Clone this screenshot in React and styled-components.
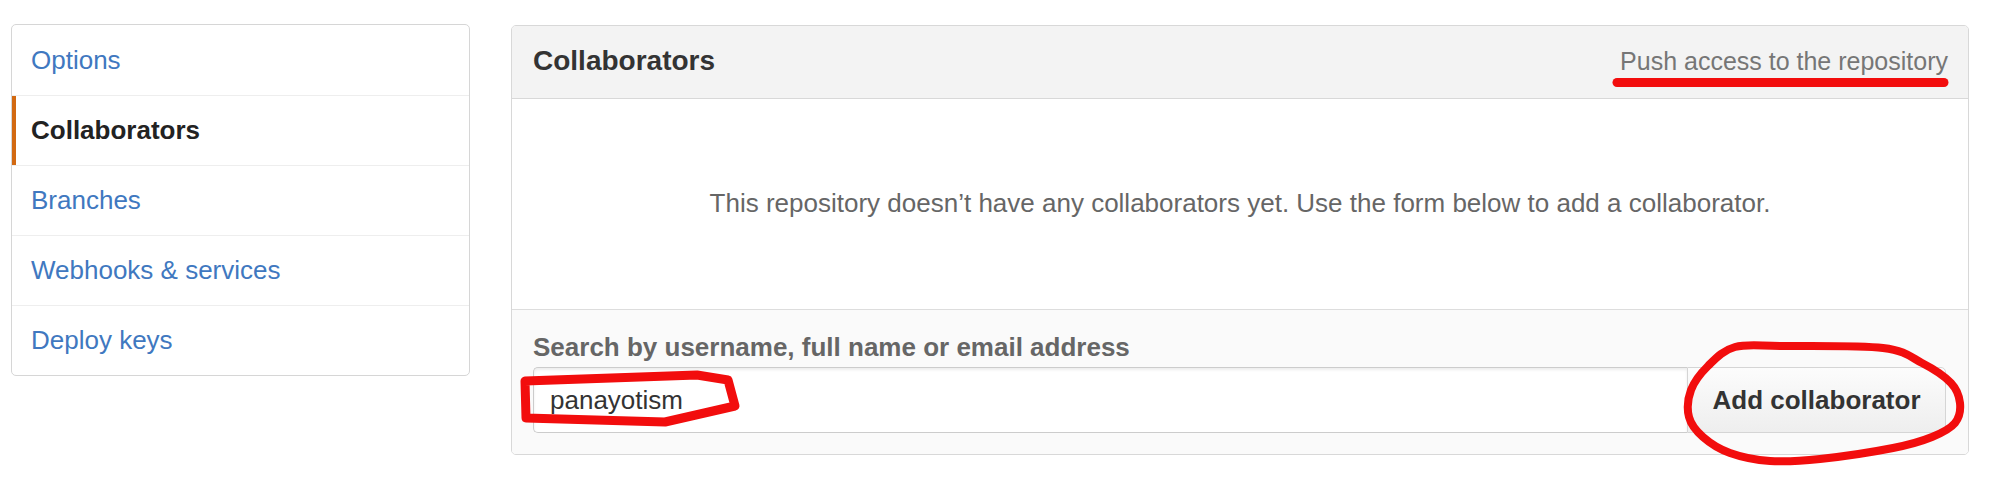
import React from "react";
import styled, { createGlobalStyle } from "styled-components";

const GlobalStyle = createGlobalStyle`
  html, body {
    margin: 0;
    padding: 0;
    background: #ffffff;
  }
  body {
    font-family: "Liberation Sans", Arial, Helvetica, sans-serif;
    color: #333;
  }
  * { box-sizing: border-box; }
`;

const Root = styled.div`
  position: relative;
  width: 2008px;
  min-height: 496px;
`;

const Page = styled.div`
  display: flex;
  align-items: flex-start;
  gap: 41px;
  padding: 24px 39px 0 11px;
`;

const Sidebar = styled.nav`
  flex: none;
  width: 459px;
  border: 1px solid #d6d6d6;
  border-radius: 5px;
  background: #fff;
  overflow: hidden;
`;

const MenuItem = styled.a`
  display: flex;
  align-items: center;
  height: 70px;
  padding: 0 0 2px 19px;
  font-size: 26px;
  line-height: 30px;
  text-decoration: none;
  border-top: 1px solid ${(p) => (p.$first ? "transparent" : "#eeeeee")};
  color: ${(p) => (p.$active ? "#222222" : "#4078c0")};
  font-weight: ${(p) => (p.$active ? 700 : 400)};
  box-shadow: ${(p) => (p.$active ? "inset 4px 0 0 #d26911" : "none")};
  cursor: pointer;
`;

const Panel = styled.section`
  flex: 1;
  margin-top: 1px;
  border: 1px solid #d8d8d8;
  border-radius: 5px;
  overflow: hidden;
  background: #fff;
`;

const PanelHeader = styled.header`
  display: flex;
  justify-content: space-between;
  align-items: center;
  height: 73px;
  padding: 0 20px 3px 21px;
  background: #f3f3f3;
  border-bottom: 1px solid #d8d8d8;
`;

const Title = styled.h3`
  margin: 0;
  font-size: 28px;
  line-height: 32px;
  font-weight: 700;
  color: #333;
`;

const HeaderNote = styled.span`
  font-size: 25px;
  line-height: 30px;
  color: #767676;
`;

const PanelBody = styled.div`
  display: flex;
  align-items: center;
  justify-content: center;
  height: 211px;
  padding-bottom: 2px;
  border-bottom: 1px solid #dddddd;
  font-size: 26px;
  line-height: 30px;
  color: #666;
`;

const FormSection = styled.form`
  background: #fafafa;
  padding: 22px 22px 21px 21px;
`;

const Label = styled.label`
  display: block;
  margin-bottom: 5px;
  font-size: 26px;
  line-height: 30px;
  font-weight: 700;
  color: #666;
`;

const InputGroup = styled.div`
  display: flex;
  height: 66px;
`;

const TextInput = styled.input`
  flex: 1;
  min-width: 0;
  height: 100%;
  padding: 0 16px;
  border: 1px solid #cccccc;
  border-right: none;
  border-radius: 5px 0 0 5px;
  background: #fff;
  box-shadow: inset 0 2px 3px rgba(0, 0, 0, 0.075);
  font-family: inherit;
  font-size: 26px;
  color: #333;
  outline: none;
`;

const Button = styled.button`
  flex: none;
  width: 259px;
  height: 100%;
  padding: 0 20px;
  border: 1px solid #d5d5d5;
  border-radius: 0 5px 5px 0;
  background: linear-gradient(#fcfcfc, #eeeeee);
  font-family: inherit;
  font-size: 26px;
  font-weight: 700;
  color: #333;
  white-space: nowrap;
  text-align: center;
  cursor: pointer;
`;

const Annotations = styled.svg`
  position: absolute;
  top: 0;
  left: 0;
  width: 2008px;
  height: 496px;
  pointer-events: none;
`;

function smoothClosed(pts) {
  const n = pts.length;
  let d = `M${pts[0][0]},${pts[0][1]}`;
  for (let i = 0; i < n; i++) {
    const p0 = pts[(i - 1 + n) % n];
    const p1 = pts[i];
    const p2 = pts[(i + 1) % n];
    const p3 = pts[(i + 2) % n];
    const c1 = [p1[0] + (p2[0] - p0[0]) / 6, p1[1] + (p2[1] - p0[1]) / 6];
    const c2 = [p2[0] - (p3[0] - p1[0]) / 6, p2[1] - (p3[1] - p1[1]) / 6];
    d += ` C${c1[0].toFixed(1)},${c1[1].toFixed(1)} ${c2[0].toFixed(1)},${c2[1].toFixed(1)} ${p2[0]},${p2[1]}`;
  }
  return d + " Z";
}

const ellipsePts = [
  [1735, 347],
  [1782, 346],
  [1883, 348],
  [1922, 363],
  [1951, 383],
  [1960, 403],
  [1955, 423],
  [1932, 437],
  [1893, 448],
  [1820, 459],
  [1770, 461],
  [1730, 453],
  [1703, 437],
  [1689, 417],
  [1691, 390],
  [1708, 366],
];

const ellipsePath = smoothClosed(ellipsePts);

const menu = [
  { label: "Options" },
  { label: "Collaborators", active: true },
  { label: "Branches" },
  { label: "Webhooks & services" },
  { label: "Deploy keys" },
];

export default function App() {
  return (
    <Root>
      <GlobalStyle />
      <Page>
        <Sidebar>
          {menu.map((m, i) => (
            <MenuItem key={m.label} $first={i === 0} $active={m.active}>
              {m.label}
            </MenuItem>
          ))}
        </Sidebar>
        <Panel>
          <PanelHeader>
            <Title>Collaborators</Title>
            <HeaderNote>Push access to the repository</HeaderNote>
          </PanelHeader>
          <PanelBody>
            This repository doesn’t have any collaborators yet. Use the form below to add a collaborator.
          </PanelBody>
          <FormSection onSubmit={(e) => e.preventDefault()}>
            <Label htmlFor="collab-search">Search by username, full name or email address</Label>
            <InputGroup>
              <TextInput id="collab-search" type="text" defaultValue="panayotism" />
              <Button type="submit">Add collaborator</Button>
            </InputGroup>
          </FormSection>
        </Panel>
      </Page>
      <Annotations viewBox="0 0 2008 496">
        <line x1="1617" y1="82.5" x2="1944" y2="82.5" stroke="#f20d0d" strokeWidth="9" strokeLinecap="round" />
        <path
          d="M525,381 L697,375 L728,380 L735,406 L665,422 L526,418 Z"
          fill="none"
          stroke="#f20d0d"
          strokeWidth="9"
          strokeLinejoin="round"
        />
        <path d={ellipsePath} fill="none" stroke="#f20d0d" strokeWidth="8" strokeLinejoin="round" />
      </Annotations>
    </Root>
  );
}
